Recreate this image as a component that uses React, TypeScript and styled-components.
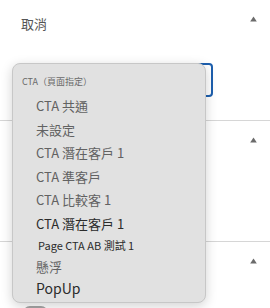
import styled, { createGlobalStyle } from "styled-components";

const GlobalStyle = createGlobalStyle`
  html, body {
    margin: 0;
    padding: 0;
    background: #ffffff;
    font-family: "Noto Sans CJK TC", "Noto Sans", sans-serif;
  }
`;

interface IOption {
  label: string;
  h: number;
  size: number;
  tone: "soft" | "strong";
  indent?: number;
}

const options: IOption[] = [
  { label: "CTA 共通", h: 23.5, size: 13, tone: "soft" },
  { label: "未設定", h: 23.5, size: 13, tone: "soft" },
  { label: "CTA 潛在客戶 1", h: 23.5, size: 13, tone: "soft" },
  { label: "CTA 準客戶", h: 23.5, size: 13, tone: "soft" },
  { label: "CTA 比較客 1", h: 23.5, size: 13, tone: "soft" },
  { label: "CTA 潛在客戶 1", h: 23.5, size: 13, tone: "strong" },
  { label: "Page CTA AB 測試 1", h: 19, size: 11, tone: "strong", indent: 2 },
  { label: "懸浮", h: 24, size: 13, tone: "soft" },
  { label: "PopUp", h: 20, size: 14, tone: "strong" },
];

function Caret() {
  return (
    <svg width="7" height="6" viewBox="0 0 7 6">
      <path d="M3.5 0.5 L6.8 5.5 L0.2 5.5 Z" fill="#6b6b6b" />
    </svg>
  );
}

function App() {
  return (
    <>
      <GlobalStyle />
      <Page>
        <Section $h={121}>
          <SectionHead>
            <HeadTitle>取消</HeadTitle>
            <CaretBox>
              <Caret />
            </CaretBox>
          </SectionHead>
          <SelectWrap>
            <SelectBox />
            <Menu>
              <MenuGroupLabel>CTA（頁面指定）</MenuGroupLabel>
              <MenuList>
                {options.map((o, i) => (
                  <MenuItem
                    key={i}
                    $h={o.h}
                    $size={o.size}
                    $tone={o.tone}
                    $indent={o.indent ?? 0}
                  >
                    {o.label}
                  </MenuItem>
                ))}
              </MenuList>
            </Menu>
          </SelectWrap>
        </Section>
        <Section $h={121}>
          <SectionHead>
            <HeadTitle />
            <CaretBox>
              <Caret />
            </CaretBox>
          </SectionHead>
        </Section>
        <Section $h={80} $last>
          <SectionHead>
            <HeadTitle />
            <CaretBox>
              <Caret />
            </CaretBox>
          </SectionHead>
          <Toggle />
        </Section>
      </Page>
    </>
  );
}

const Page = styled.div`
  width: 270px;
  height: 308px;
  overflow: hidden;
  position: relative;
`;

const Section = styled.div<{ $h: number; $last?: boolean }>`
  height: ${(p) => p.$h}px;
  box-sizing: border-box;
  border-bottom: ${(p) => (p.$last ? "none" : "1px solid #d6d6d6")};
  display: flex;
  flex-direction: column;
`;

const SectionHead = styled.div`
  height: 40px;
  display: flex;
  align-items: flex-start;
  justify-content: space-between;
  padding: 0 13px 0 21px;
`;

const HeadTitle = styled.div`
  margin-top: 15px;
  font-size: 13px;
  line-height: 18px;
  color: #555555;
`;

const CaretBox = styled.div`
  margin-top: 16px;
  display: flex;
`;

const SelectWrap = styled.div`
  position: relative;
  margin: 23px 57px 0 20px;
`;

const SelectBox = styled.div`
  height: 34px;
  box-sizing: border-box;
  border: 2px solid #1d5fae;
  border-radius: 4px;
`;

const Menu = styled.div`
  position: absolute;
  top: 0;
  left: -8px;
  width: 194px;
  height: 240px;
  box-sizing: border-box;
  background: #e1e1e1;
  border: 1px solid #c7c7c7;
  border-radius: 8px;
  box-shadow: 0 3px 12px rgba(0, 0, 0, 0.18);
  padding: 6px 0 0 0;
  z-index: 10;
`;

const MenuGroupLabel = styled.div`
  height: 22px;
  display: flex;
  align-items: center;
  padding-left: 9px;
  font-size: 9px;
  color: #6a6a6a;
  margin-bottom: 2px;
`;

const MenuList = styled.div`
  display: flex;
  flex-direction: column;
`;

const MenuItem = styled.div<{
  $h: number;
  $size: number;
  $tone: "soft" | "strong";
  $indent: number;
}>`
  height: ${(p) => p.$h}px;
  display: flex;
  align-items: center;
  padding-left: ${(p) => 23 + p.$indent}px;
  font-size: ${(p) => p.$size}px;
  color: ${(p) => (p.$tone === "strong" ? "#2b2b2b" : "#626262")};
  white-space: nowrap;
`;

const Toggle = styled.div`
  margin: 24px 0 0 23px;
  width: 25px;
  height: 14px;
  border-radius: 7px;
  background: #a5a5a5;
`;

export default App;
